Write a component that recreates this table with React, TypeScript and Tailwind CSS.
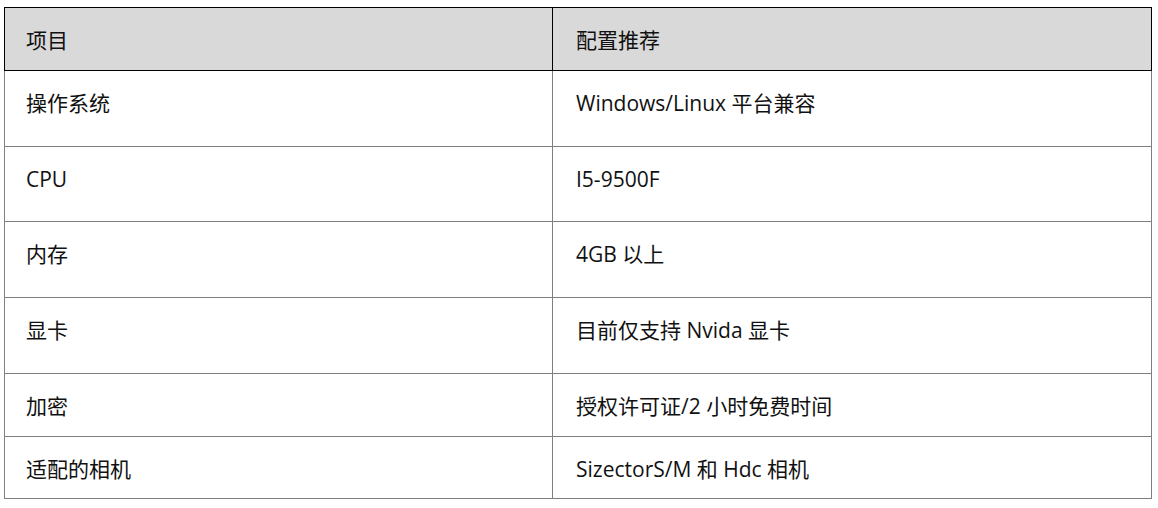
const rows: { h: number; name: string; value: string }[] = [
  { h: 76, name: "操作系统", value: "Windows/Linux 平台兼容" },
  { h: 75, name: "CPU", value: "I5-9500F" },
  { h: 76, name: "内存", value: "4GB 以上" },
  { h: 76, name: "显卡", value: "目前仅支持 Nvida 显卡" },
  { h: 63, name: "加密", value: "授权许可证/2 小时免费时间" },
  { h: 62, name: "适配的相机", value: "SizectorS/M 和 Hdc 相机" },
];

const font = { fontFamily: '"Open Sans", "Noto Sans CJK SC", sans-serif' };

export default function App() {
  return (
    <div className="w-[1158px] h-[508px] bg-white pt-[7px] pl-[4px]" style={font}>
      <div className="w-[1148px] text-[21px] leading-[28px] text-[#111]">
        <div className="flex h-[64px] bg-[#d9d9d9] border border-black">
          <div className="w-[548px] shrink-0 border-r border-black pl-[21px] pt-[18px]">项目</div>
          <div className="flex-1 pl-[23px] pt-[18px]">配置推荐</div>
        </div>
        {rows.map((r) => (
          <div
            key={r.name}
            className="flex border-x border-b border-[#7f7f7f]"
            style={{ height: r.h }}
          >
            <div className="w-[548px] shrink-0 border-r border-[#7f7f7f] pl-[21px] pt-[18px]">{r.name}</div>
            <div className="flex-1 pl-[23px] pt-[18px]">{r.value}</div>
          </div>
        ))}
      </div>
    </div>
  );
}
